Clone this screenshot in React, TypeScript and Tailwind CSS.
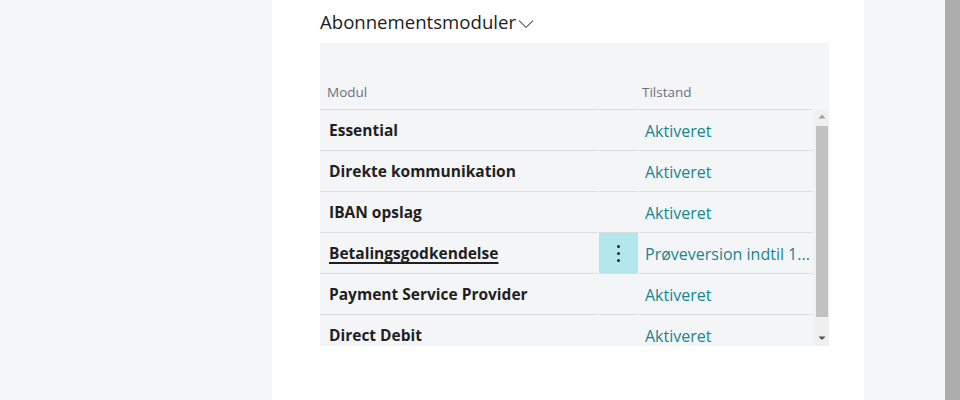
import React from "react";

const rows = [
  { name: "Essential", status: "Aktiveret" },
  { name: "Direkte kommunikation", status: "Aktiveret" },
  { name: "IBAN opslag", status: "Aktiveret" },
  { name: "Betalingsgodkendelse", status: "Prøveversion indtil 1...", active: true },
  { name: "Payment Service Provider", status: "Aktiveret" },
  { name: "Direct Debit", status: "Aktiveret" },
];

export default function App() {
  return (
    <div
      className="flex h-[400px] w-[960px] overflow-hidden bg-[#f5f6f8]"
      style={{ fontFamily: '"Open Sans", "Noto Sans", sans-serif' }}
    >
      <div className="w-[272px] shrink-0" />
      <div className="w-[592px] shrink-0 bg-white pl-12 pt-[9px]">
        <div className="flex items-center h-[26px] text-[18.6px] text-[#212121]">
          <span>Abonnementsmoduler</span>
          <svg width="16" height="10" viewBox="0 0 16 10" className="ml-[2px] mt-[3px]">
            <path d="M1 1.5 L8 8.5 L15 1.5" fill="none" stroke="#6a6a7a" strokeWidth="1.1" />
          </svg>
        </div>
        <div className="mt-[8px] w-[509px] bg-[#f4f5f7]">
          <div className="flex h-[67px] items-end text-[13.5px] text-[#6d717c]">
            <div className="w-[278px] pl-[7px] pb-[7px] border-b border-[#d9dadd] mr-px">Modul</div>
            <div className="w-[39px] border-b border-[#d9dadd] mr-px h-px" />
            <div className="w-[173px] pl-[3px] pb-[7px] border-b border-[#d9dadd]">Tilstand</div>
          </div>
          <div className="flex h-[236px] overflow-hidden">
            <div className="w-[493px]">
              {rows.map((r) => (
                <div key={r.name} className="flex h-[41px]">
                  <div className="w-[278px] mr-px border-b border-[#dcdde0] pl-[9px] pt-[2px] flex items-center text-[15.5px] font-bold text-[#1f1f1f]">
                    <span className={r.active ? "underline underline-offset-[3px] decoration-[1.5px]" : ""}>{r.name}</span>
                  </div>
                  <div
                    className={`w-[39px] mr-px border-b border-[#dcdde0] flex items-center justify-center ${
                      r.active ? "bg-[#b2e8ec]" : ""
                    }`}
                  >
                    {r.active && (
                      <div className="flex flex-col gap-[4px]">
                        <div className="h-[3px] w-[3px] rounded-full bg-[#222]" />
                        <div className="h-[3px] w-[3px] rounded-full bg-[#222]" />
                        <div className="h-[3px] w-[3px] rounded-full bg-[#222]" />
                      </div>
                    )}
                  </div>
                  <div className="w-[174px] border-b border-[#dcdde0] pl-[6px] pt-[2px] flex items-center text-[16px] text-[#16868f] whitespace-nowrap overflow-hidden">
                    {r.status}
                  </div>
                </div>
              ))}
            </div>
            <div className="ml-px w-[16px] bg-[#f0f0f0] flex flex-col items-center">
              <svg width="8" height="16" viewBox="0 0 8 16" className="shrink-0">
                <path d="M0.5 8.5 L4 4.5 L7.5 8.5 Z" fill="#a0a0a0" />
              </svg>
              <div className="w-[12px] h-[191px] bg-[#c1c1c1]" />
              <div className="flex-1" />
              <svg width="8" height="14" viewBox="0 0 8 14" className="shrink-0">
                <path d="M0.5 4.5 L4 8 L7.5 4.5 Z" fill="#505050" />
              </svg>
            </div>
          </div>
        </div>
      </div>
      <div className="w-[81px] shrink-0" />
      <div className="w-[15px] shrink-0 bg-[#adadad]" />
    </div>
  );
}
